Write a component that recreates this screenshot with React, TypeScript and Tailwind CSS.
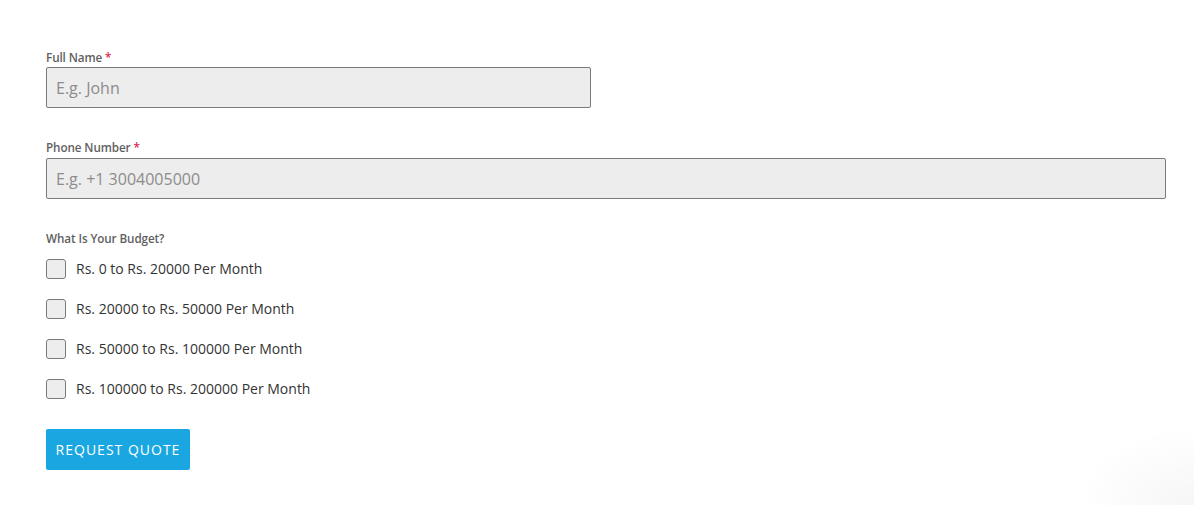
import React from "react";

export default function App() {
  const options = [
    "Rs. 0 to Rs. 20000 Per Month",
    "Rs. 20000 to Rs. 50000 Per Month",
    "Rs. 50000 to Rs. 100000 Per Month",
    "Rs. 100000 to Rs. 200000 Per Month",
  ];
  return (
    <div className="w-[1194px] h-[505px] bg-white overflow-hidden relative font-['Open_Sans',_'Noto_Sans',_sans-serif]">
      <div className="absolute right-0 bottom-0 w-[120px] h-[80px] bg-[radial-gradient(ellipse_at_bottom_right,_rgba(0,0,0,0.035),_rgba(0,0,0,0)_70%)]" />
      <div className="relative pl-[46px] pr-[28px] pt-[49px] flex flex-col">
        <label className="text-[11.7px] leading-[16px] font-semibold text-[#5f5f5f] tracking-[-0.1px]">
          Full Name <span className="text-[#e0284f]">*</span>
        </label>
        <input
          className="mt-[2px] w-[545px] h-[41px] bg-[#ededed] border border-[#7a7a7a] rounded-[2px] px-[9px] text-[16px] text-[#333] placeholder:text-[#8c8c8c] outline-none font-['Open_Sans',_sans-serif]"
          placeholder="E.g. John"
        />
        <label className="mt-[31px] text-[11.7px] leading-[16px] font-semibold text-[#5f5f5f] tracking-[-0.1px]">
          Phone Number <span className="text-[#e0284f]">*</span>
        </label>
        <input
          className="mt-[3px] w-[1120px] h-[41px] bg-[#ededed] border border-[#7a7a7a] rounded-[2px] px-[9px] text-[16px] text-[#333] placeholder:text-[#8c8c8c] outline-none font-['Open_Sans',_sans-serif]"
          placeholder="E.g. +1 3004005000"
        />
        <label className="mt-[31px] text-[11.7px] leading-[16px] font-semibold text-[#5f5f5f] tracking-[-0.1px]">
          What Is Your Budget?
        </label>
        <div className="mt-[13px] flex flex-col gap-[20px]">
          {options.map((o) => (
            <div key={o} className="flex items-center h-[20px]">
              <span className="w-[20px] h-[20px] bg-[#ededed] border border-[#7a7a7a] rounded-[3px] shrink-0" />
              <span className="ml-[10px] text-[14px] leading-[20px] text-[#333]">{o}</span>
            </div>
          ))}
        </div>
        <button className="mt-[30px] w-[144px] h-[41px] bg-[#1aa7e1] rounded-[2px] text-white text-[14px] tracking-[1px] uppercase">
          Request Quote
        </button>
      </div>
    </div>
  );
}
